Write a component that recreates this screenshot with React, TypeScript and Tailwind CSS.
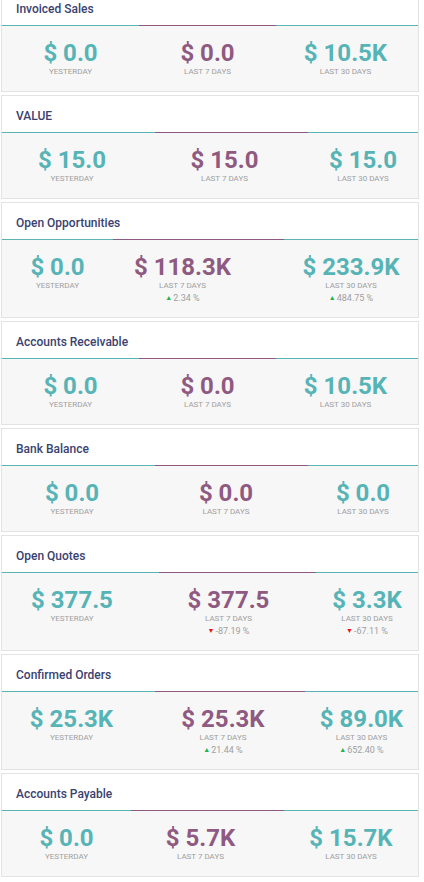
type Pct = { up: boolean; text: string };
type Stat = { value: string; label: string; shift?: string; pct?: Pct };
type Card = { title: string; segs: [string, string]; stats: [Stat, Stat, Stat] };

const cards: Card[] = [
  {
    title: "Invoiced Sales",
    segs: ["w-[137px]", "w-[137px]"],
    stats: [
      { value: "$ 0.0", label: "YESTERDAY" },
      { value: "$ 0.0", label: "LAST 7 DAYS" },
      { value: "$ 10.5K", label: "LAST 30 DAYS", shift: "pr-[3px]" },
    ],
  },
  {
    title: "VALUE",
    segs: ["w-[153px]", "w-[153px]"],
    stats: [
      { value: "$ 15.0", label: "YESTERDAY", shift: "pr-[13px]" },
      { value: "$ 15.0", label: "LAST 7 DAYS", shift: "pr-[14px]" },
      { value: "$ 15.0", label: "LAST 30 DAYS" },
    ],
  },
  {
    title: "Open Opportunities",
    segs: ["w-[111px]", "w-[171px]"],
    stats: [
      { value: "$ 0.0", label: "YESTERDAY" },
      { value: "$ 118.3K", label: "LAST 7 DAYS", shift: "pr-[32px]", pct: { up: true, text: "2.34 %" } },
      { value: "$ 233.9K", label: "LAST 30 DAYS", pct: { up: true, text: "484.75 %" } },
    ],
  },
  {
    title: "Accounts Receivable",
    segs: ["w-[137px]", "w-[137px]"],
    stats: [
      { value: "$ 0.0", label: "YESTERDAY" },
      { value: "$ 0.0", label: "LAST 7 DAYS" },
      { value: "$ 10.5K", label: "LAST 30 DAYS", shift: "pr-[3px]" },
    ],
  },
  {
    title: "Bank Balance",
    segs: ["w-[153px]", "w-[153px]"],
    stats: [
      { value: "$ 0.0", label: "YESTERDAY", shift: "pr-[13px]" },
      { value: "$ 0.0", label: "LAST 7 DAYS", shift: "pr-[11px]" },
      { value: "$ 0.0", label: "LAST 30 DAYS" },
    ],
  },
  {
    title: "Open Quotes",
    segs: ["w-[157px]", "w-[157px]"],
    stats: [
      { value: "$ 377.5", label: "YESTERDAY", shift: "pr-[17px]" },
      { value: "$ 377.5", label: "LAST 7 DAYS", shift: "pr-[18px]", pct: { up: false, text: "-87.19 %" } },
      { value: "$ 3.3K", label: "LAST 30 DAYS", pct: { up: false, text: "-67.11 %" } },
    ],
  },
  {
    title: "Confirmed Orders",
    segs: ["w-[153px]", "w-[150px]"],
    stats: [
      { value: "$ 25.3K", label: "YESTERDAY", shift: "pr-[14px]" },
      { value: "$ 25.3K", label: "LAST 7 DAYS", shift: "pr-[14px]", pct: { up: true, text: "21.44 %" } },
      { value: "$ 89.0K", label: "LAST 30 DAYS", pct: { up: true, text: "652.40 %" } },
    ],
  },
  {
    title: "Accounts Payable",
    segs: ["w-[129px]", "w-[153px]"],
    stats: [
      { value: "$ 0.0", label: "YESTERDAY" },
      { value: "$ 5.7K", label: "LAST 7 DAYS", shift: "pr-[14px]" },
      { value: "$ 15.7K", label: "LAST 30 DAYS" },
    ],
  },
];

const colColor = ["text-[#56b4b6]", "text-[#8f5a81]", "text-[#56b4b6]"];

function StatCol({ stat, idx, width }: { stat: Stat; idx: number; width: string }) {
  return (
    <div className={`${width} flex flex-col items-center ${stat.shift ?? ""}`}>
      <div className={`text-[24px] leading-[28px] font-bold whitespace-nowrap ${colColor[idx]}`}>{stat.value}</div>
      <div className="text-[8px] leading-[10px] text-[#a0a0a0] whitespace-nowrap">{stat.label}</div>
      {stat.pct && (
        <div className="mt-[2px] text-[9px] leading-[10px] text-[#a0a0a0] whitespace-nowrap flex items-center">
          <span className={`text-[7px] mr-[1px] ${stat.pct.up ? "text-[#22b14c]" : "text-[#ee1111]"}`}>
            {stat.pct.up ? "▲" : "▼"}
          </span>
          {stat.pct.text}
        </div>
      )}
    </div>
  );
}

function KpiCard({ card }: { card: Card }) {
  return (
    <div className="border border-[#e3e3e3] bg-white">
      <div className="pl-[14px] pt-[12px] pb-[8px] text-[12px] leading-[16px] font-medium text-[#3a4270]">
        {card.title}
      </div>
      <div className="flex h-px">
        <div className={`${card.segs[0]} bg-[#5ab4b6]`} />
        <div className={`${card.segs[1]} bg-[#8f5a81]`} />
        <div className="flex-1 bg-[#5ab4b6]" />
      </div>
      <div className="flex bg-[#f7f7f7] pt-[13px] pb-[14px]">
        <StatCol stat={card.stats[0]} idx={0} width={card.segs[0]} />
        <StatCol stat={card.stats[1]} idx={1} width={card.segs[1]} />
        <StatCol stat={card.stats[2]} idx={2} width="flex-1" />
      </div>
    </div>
  );
}

export default function App() {
  return (
    <div className="h-[882px] overflow-hidden bg-white font-['Roboto','Liberation_Sans',sans-serif]">
      <div className="-mt-[12px] ml-[1px] w-[418px] flex flex-col gap-[3px]">
        {cards.map((c) => (
          <KpiCard key={c.title} card={c} />
        ))}
      </div>
    </div>
  );
}
